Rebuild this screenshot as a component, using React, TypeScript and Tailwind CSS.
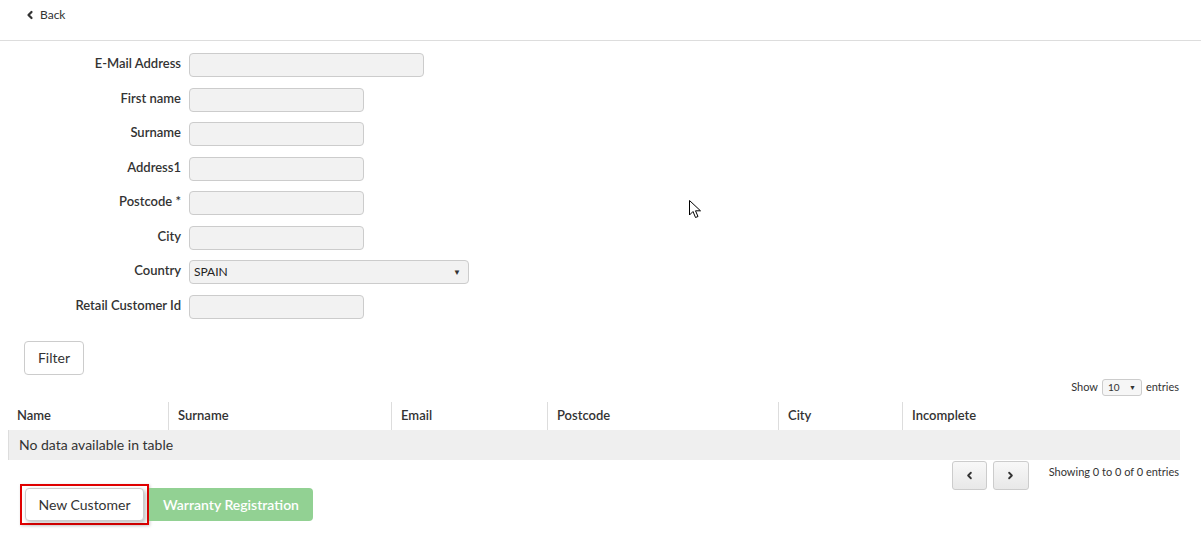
import React from 'react';
import { ChevronLeft, ChevronRight } from 'lucide-react';

const fields = [
    { label: 'E-Mail Address', width: 'w-[235px]' },
    { label: 'First name', width: 'w-[175px]' },
    { label: 'Surname', width: 'w-[175px]' },
    { label: 'Address1', width: 'w-[175px]' },
    { label: 'Postcode *', width: 'w-[175px]' },
    { label: 'City', width: 'w-[175px]' },
];

const columns = [
    { title: 'Name', width: 'w-[161px]' },
    { title: 'Surname', width: 'w-[223px]' },
    { title: 'Email', width: 'w-[156px]' },
    { title: 'Postcode', width: 'w-[231px]' },
    { title: 'City', width: 'w-[124px]' },
    { title: 'Incomplete', width: 'flex-1' },
];

function FormRow({ label, children }: { label: string; children: React.ReactNode }) {
    return (
        <div className="flex items-start gap-[8px]">
            <label className="w-[181px] text-right text-[13px] font-semibold leading-[20px] text-[#333]">{label}</label>
            {children}
        </div>
    );
}

export default function App() {
    return (
        <div className="relative min-h-screen w-full bg-white font-['Lato',sans-serif] text-[#333]">
            <div className="h-[41px] border-b border-[#dddddd] pl-[24px] pt-[6px]">
                <a className="flex items-center gap-[4px] text-[12px] text-[#333]">
                    <ChevronLeft className="h-[12px] w-[12px]" strokeWidth={4.5} />
                    Back
                </a>
            </div>

            <div className="flex flex-col gap-[10.5px] pt-[12px]">
                {fields.map((f) => (
                    <FormRow key={f.label} label={f.label}>
                        <div className={`${f.width} h-[24px] rounded-[4px] border border-[#cccccc] bg-[#f2f2f2]`} />
                    </FormRow>
                ))}
                <FormRow label="Country">
                    <div className="flex h-[24px] w-[280px] items-center justify-between rounded-[4px] border border-[#cccccc] bg-[#f2f2f2] pl-[4px] pr-[7px] text-[12px] text-[#222]">
                        <span>SPAIN</span>
                        <span className="text-[8px] text-[#333]">▼</span>
                    </div>
                </FormRow>
                <FormRow label="Retail Customer Id">
                    <div className="h-[24px] w-[175px] rounded-[4px] border border-[#cccccc] bg-[#f2f2f2]" />
                </FormRow>
            </div>

            <div className="pl-[24px] pt-[22px]">
                <button className="h-[34px] w-[60px] rounded-[4px] border border-[#cccccc] bg-white text-[14px] text-[#333]">
                    Filter
                </button>
            </div>

            <div className="flex items-center justify-end gap-[4px] pr-[22px] pt-[4px] text-[11px] text-[#333]">
                <span>Show</span>
                <div className="flex h-[17px] w-[40px] items-center justify-between rounded-[3px] border border-[#cccccc] bg-[#f6f6f6] px-[5px] text-[10px]">
                    <span>10</span>
                    <span className="text-[7px]">▼</span>
                </div>
                <span>entries</span>
            </div>

            <div className="mx-[8px] mr-[21px] mt-[6px]">
                <div className="flex h-[28px] text-[13px] font-semibold">
                    {columns.map((c, i) => (
                        <div
                            key={c.title}
                            className={`${c.width} flex items-center pl-[9px] ${i < columns.length - 1 ? 'border-r border-[#dddddd]' : ''}`}
                        >
                            {c.title}
                        </div>
                    ))}
                </div>
                <div className="flex h-[30px] items-center border-l border-[#dddddd] bg-[#efefef] pl-[10px] text-[14px]">
                    No data available in table
                </div>
            </div>

            <div className="flex h-[24px] items-start justify-end pr-[22px]">
                <div className="flex gap-[6px] pt-[1px]">
                    <button className="flex h-[29px] w-[35px] items-center justify-center rounded-[3px] border border-[#cccccc] bg-gradient-to-b from-[#f8f8f8] to-[#e8e8e8]">
                        <ChevronLeft className="h-[11px] w-[11px] text-[#333]" strokeWidth={4} />
                    </button>
                    <button className="flex h-[29px] w-[36px] items-center justify-center rounded-[3px] border border-[#cccccc] bg-gradient-to-b from-[#f8f8f8] to-[#e8e8e8]">
                        <ChevronRight className="h-[11px] w-[11px] text-[#333]" strokeWidth={4} />
                    </button>
                </div>
                <span className="ml-[20px] pt-[4px] text-[11px]">Showing 0 to 0 of 0 entries</span>
            </div>

            <div className="flex items-center pl-[20px]">
                <div className="border-2 border-[#e00000] px-[3px] py-[2px] shadow-[1px_1px_3px_rgba(0,0,0,0.2)]">
                    <button className="h-[33px] w-[119px] rounded-[4px] border border-[#cccccc] bg-white text-[14px] text-[#333] shadow-[2px_2px_4px_rgba(0,0,0,0.25)]">
                        New Customer
                    </button>
                </div>
                <button className="h-[33px] w-[164px] rounded-r-[4px] bg-[#92d193] text-[14px] font-semibold text-white">
                    Warranty Registration
                </button>
            </div>

            <svg className="absolute left-[689px] top-[200px]" width="13" height="20" viewBox="0 0 13 20">
                <path d="M0.5 0.5 L0.5 15 L4 11.5 L6.5 17.5 L9 16.5 L6.5 10.8 L11.5 10.8 Z" fill="white" stroke="black" strokeWidth="1" strokeLinejoin="round" />
            </svg>
        </div>
    );
}
